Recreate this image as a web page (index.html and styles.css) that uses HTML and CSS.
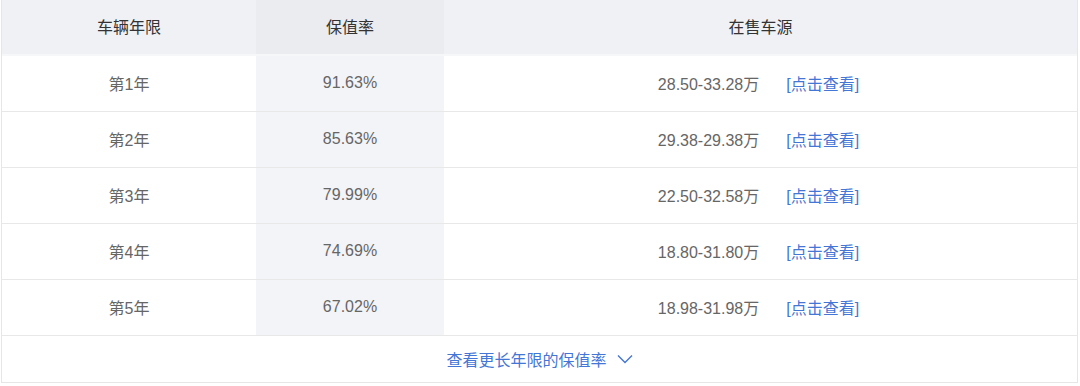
FILE: index.html
```html
<!DOCTYPE html>
<html lang="zh">
<head>
<meta charset="utf-8">
<link rel="stylesheet" href="styles.css">
</head>
<body>
<div class="table">
  <div class="row head">
    <div class="cell">车辆年限</div>
    <div class="cell rate">保值率</div>
    <div class="cell">在售车源</div>
  </div>
  <div class="row">
    <div class="cell">第1年</div>
    <div class="cell rate">91.63%</div>
    <div class="cell src"><span class="price">28.50-33.28万</span><a class="link">[点击查看]</a></div>
  </div>
  <div class="row">
    <div class="cell">第2年</div>
    <div class="cell rate">85.63%</div>
    <div class="cell src"><span class="price">29.38-29.38万</span><a class="link">[点击查看]</a></div>
  </div>
  <div class="row">
    <div class="cell">第3年</div>
    <div class="cell rate">79.99%</div>
    <div class="cell src"><span class="price">22.50-32.58万</span><a class="link">[点击查看]</a></div>
  </div>
  <div class="row">
    <div class="cell">第4年</div>
    <div class="cell rate">74.69%</div>
    <div class="cell src"><span class="price">18.80-31.80万</span><a class="link">[点击查看]</a></div>
  </div>
  <div class="row">
    <div class="cell">第5年</div>
    <div class="cell rate">67.02%</div>
    <div class="cell src"><span class="price">18.98-31.98万</span><a class="link">[点击查看]</a></div>
  </div>
  <div class="more">
    <span>查看更长年限的保值率</span>
    <svg class="chev" width="16" height="10" viewBox="0 0 16 10"><path d="M1 1.5l7 7 7-7" fill="none" stroke="currentColor" stroke-width="1.4"/></svg>
  </div>
</div>
</body>
</html>
```
FILE: styles.css
```css
html, body {
  margin: 0;
  padding: 0;
  background: #fff;
}
body {
  font-family: "Liberation Sans", Arial, "Noto Sans CJK SC", sans-serif;
  font-size: 16px;
  color: #666;
}
.table {
  margin: 0 2px 0 1px;
  width: 1077px;
  border-left: 1px solid #e6e6e6;
  border-right: 1px solid #e6e6e6;
  border-bottom: 1px solid #e6e6e6;
  box-sizing: border-box;
}
.row {
  display: grid;
  grid-template-columns: 254px 188px 1fr;
  height: 56px;
  border-bottom: 1px solid #e8e8e8;
  box-sizing: border-box;
}
.cell {
  display: flex;
  align-items: center;
  justify-content: center;
  padding-bottom: 2px;
}
.rate {
  background: #f3f4f8;
}
.head {
  background: #f0f1f5;
  color: #333;
  height: 56px;
  border-bottom: 2px solid #f6f7f9;
}
.head .rate {
  background: #ebecf0;
}
.src {
  gap: 27px;
  padding-right: 4px;
}
.link {
  color: #4476d6;
  cursor: pointer;
}
.more {
  height: 46px;
  display: flex;
  align-items: center;
  justify-content: center;
  gap: 10px;
  color: #4476d6;
}
.chev {
  display: block;
}
```
